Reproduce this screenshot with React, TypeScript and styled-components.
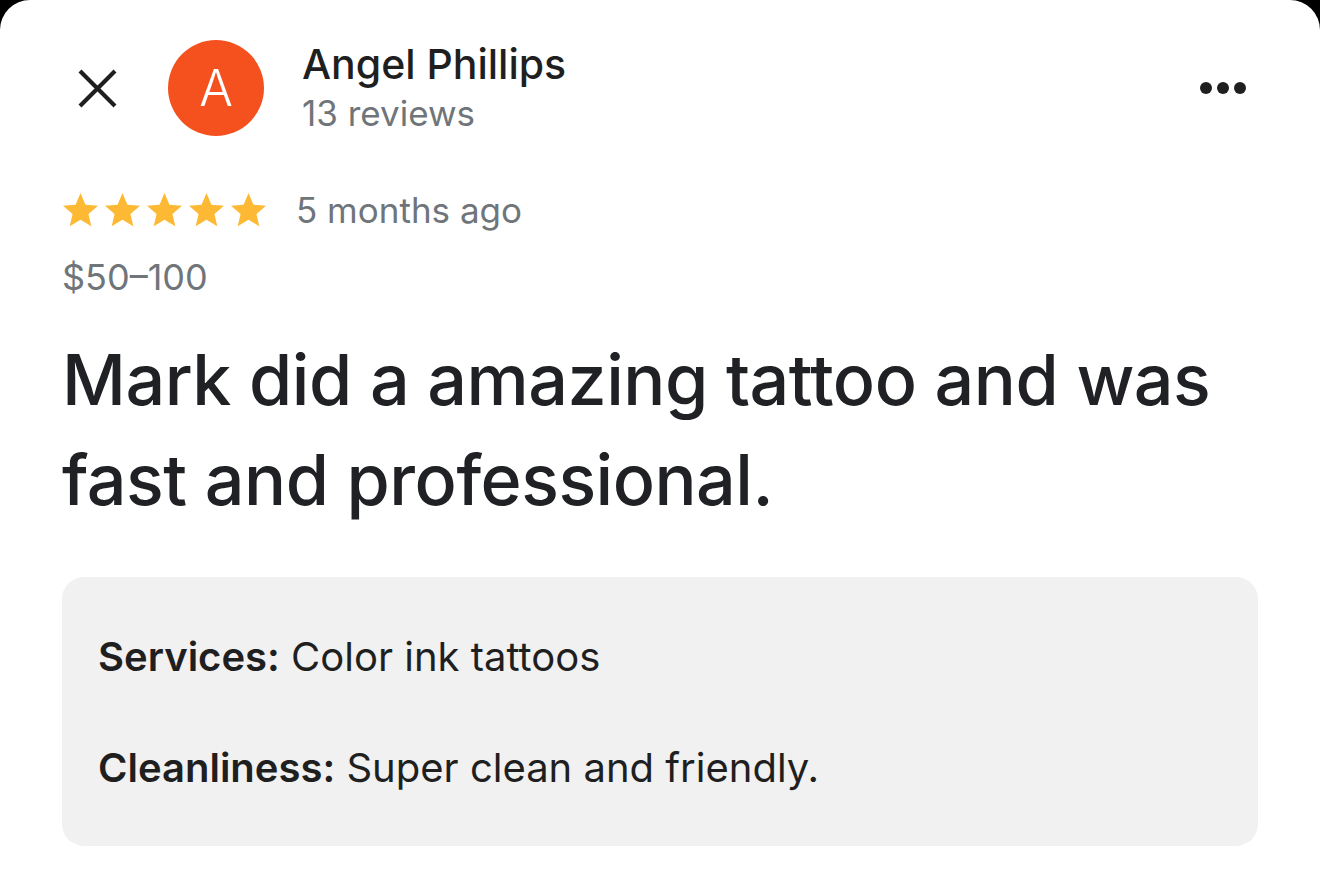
import React from 'react';
import styled, { createGlobalStyle } from 'styled-components';

const GlobalStyle = createGlobalStyle`
  html, body {
    margin: 0;
    padding: 0;
    background: #000;
  }
  body {
    font-family: Inter, "Noto Sans", sans-serif;
    -webkit-font-smoothing: antialiased;
  }
`;

const Sheet = styled.div`
  background: #fff;
  border-radius: 30px 30px 0 0;
  min-height: 875px;
  box-sizing: border-box;
  padding: 40px 62px 0 62px;
  color: #1f1f1f;
`;

const Header = styled.div`
  display: flex;
  align-items: center;
  height: 96px;
`;

const IconButton = styled.button`
  display: flex;
  align-items: center;
  justify-content: center;
  width: 70px;
  height: 70px;
  padding: 0;
  border: none;
  background: none;
  color: #1f1f1f;
`;

const Avatar = styled.div`
  width: 96px;
  height: 96px;
  border-radius: 50%;
  background: #f4511e;
  color: #fff;
  display: flex;
  align-items: center;
  justify-content: center;
  font-size: 50px;
  font-weight: 300;
  margin-left: 36px;
  flex-shrink: 0;
`;

const NameBlock = styled.div`
  display: flex;
  flex-direction: column;
  gap: 4px;
  margin-left: 38px;
  flex: 1;
`;

const Name = styled.div`
  font-size: 41px;
  line-height: 46px;
  font-weight: 500;
  color: #1f1f1f;
`;

const SubText = styled.div<{ $size?: number }>`
  font-size: ${(p) => p.$size ?? 35}px;
  line-height: 44px;
  color: #70757a;
`;

const MoreButton = styled.button`
  display: flex;
  align-items: center;
  justify-content: flex-end;
  width: 60px;
  height: 60px;
  padding: 0 12px 0 0;
  border: none;
  background: none;
`;

const RatingRow = styled.div`
  display: flex;
  align-items: center;
  margin-top: 52px;
  gap: 30px;
`;

const Stars = styled.div`
  display: flex;
  gap: 7px;
  padding-left: 1px;
`;

const Price = styled(SubText)`
  margin-top: 23px;
`;

const Heading = styled.h1`
  margin: 31px 0 0 0;
  font-size: 70px;
  line-height: 100px;
  font-weight: 500;
  color: #202124;
  letter-spacing: -0.5px;
`;

const Details = styled.div`
  margin-top: 47px;
  background: #f1f1f1;
  border-radius: 22px;
  padding: 58px 36px 56px 36px;
  display: flex;
  flex-direction: column;
  gap: 67px;
`;

const DetailLine = styled.div`
  font-size: 40px;
  line-height: 44px;
  color: #1f1f1f;

  b {
    font-weight: 600;
  }
`;

const Star = () => (
  <svg width="35" height="34" viewBox="2 2 20 19.4">
    <path
      fill="#fdb933"
      d="M12 17.27L18.18 21l-1.64-7.03L22 9.24l-7.19-.61L12 2 9.19 8.63 2 9.24l5.46 4.73L5.82 21z"
    />
  </svg>
);

const App: React.FC = () => {
  return (
    <>
      <GlobalStyle />
      <Sheet>
        <Header>
          <IconButton aria-label="Close">
            <svg width="41" height="41" viewBox="0 0 41 41">
              <path d="M3 3L38 38M38 3L3 38" stroke="#1f1f1f" strokeWidth="4.2" />
            </svg>
          </IconButton>
          <Avatar>A</Avatar>
          <NameBlock>
            <Name>Angel Phillips</Name>
            <SubText>13 reviews</SubText>
          </NameBlock>
          <MoreButton aria-label="More">
            <svg width="46" height="14" viewBox="0 0 46 14">
              <circle cx="6" cy="7" r="6" fill="#1f1f1f" />
              <circle cx="23" cy="7" r="6" fill="#1f1f1f" />
              <circle cx="40" cy="7" r="6" fill="#1f1f1f" />
            </svg>
          </MoreButton>
        </Header>

        <RatingRow>
          <Stars>
            {[0, 1, 2, 3, 4].map((i) => (
              <Star key={i} />
            ))}
          </Stars>
          <SubText>5 months ago</SubText>
        </RatingRow>

        <Price $size={36}>$50–100</Price>

        <Heading>
          Mark did a amazing tattoo and was
          <br />
          fast and professional.
        </Heading>

        <Details>
          <DetailLine>
            <b>Services:</b> Color ink tattoos
          </DetailLine>
          <DetailLine>
            <b>Cleanliness:</b> Super clean and friendly.
          </DetailLine>
        </Details>
      </Sheet>
    </>
  );
};

export default App;
